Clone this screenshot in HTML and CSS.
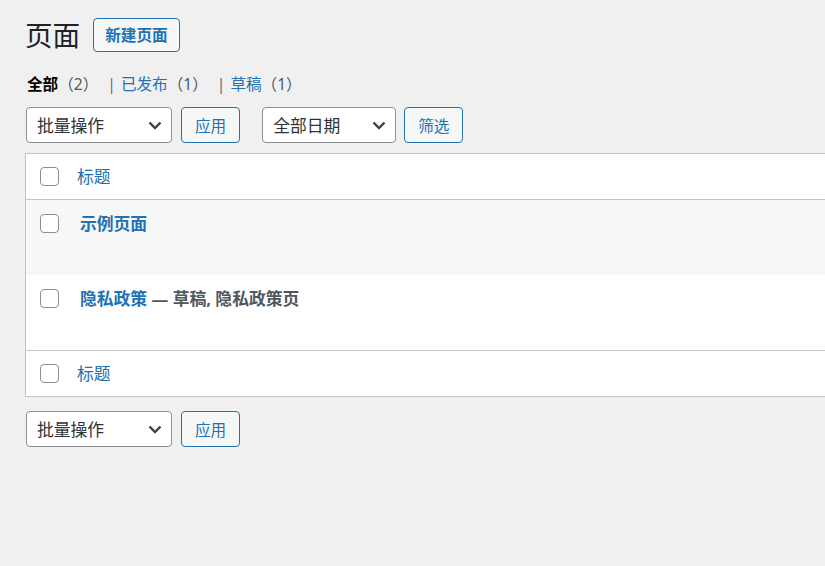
FILE: index.html
```html
<!DOCTYPE html>
<html lang="zh-CN">
<head>
    <meta charset="UTF-8">
    <meta name="viewport" content="width=device-width, initial-scale=1.0">
    <title>页面</title>
    <link rel="stylesheet" href="styles.css">
</head>
<body>
    <div class="wrap">
        <div class="page-head">
            <h1 class="page-title">页面</h1>
            <a href="#" class="title-action">新建页面</a>
        </div>

        <!-- Status filters -->
        <ul class="status-links">
            <li class="current"><a href="#">全部<span class="count">（2）</span></a></li>
            <li><span class="sep">|</span><a href="#">已发布<span class="count">（1）</span></a></li>
            <li><span class="sep">|</span><a href="#">草稿<span class="count">（1）</span></a></li>
        </ul>

        <div class="tablenav">
            <div class="select-wrap bulk">
                <select><option>批量操作</option></select>
                <svg class="chevron" width="14" height="9" viewBox="0 0 14 9"><polyline points="1.5,1.5 7,7 12.5,1.5"/></svg>
            </div>
            <button class="btn">应用</button>
            <div class="select-wrap date">
                <select><option>全部日期</option></select>
                <svg class="chevron" width="14" height="9" viewBox="0 0 14 9"><polyline points="1.5,1.5 7,7 12.5,1.5"/></svg>
            </div>
            <button class="btn">筛选</button>
        </div>

        <!-- Pages list -->
        <div class="list">
            <div class="list-head">
                <div class="check"><input type="checkbox"></div>
                <a href="#" class="col-title">标题</a>
            </div>
            <div class="list-row alt">
                <div class="check"><input type="checkbox"></div>
                <div class="row-main"><strong><a href="#" class="row-title">示例页面</a></strong></div>
            </div>
            <div class="list-row">
                <div class="check"><input type="checkbox"></div>
                <div class="row-main"><strong><a href="#" class="row-title">隐私政策</a> — <span class="post-state">草稿, 隐私政策页</span></strong></div>
            </div>
            <div class="list-foot">
                <div class="check"><input type="checkbox"></div>
                <a href="#" class="col-title">标题</a>
            </div>
        </div>

        <div class="tablenav bottom">
            <div class="select-wrap bulk">
                <select><option>批量操作</option></select>
                <svg class="chevron" width="14" height="9" viewBox="0 0 14 9"><polyline points="1.5,1.5 7,7 12.5,1.5"/></svg>
            </div>
            <button class="btn">应用</button>
        </div>
    </div>
</body>
</html>
```

FILE: styles.css
```css
html, body {
    overflow: hidden;
}
body {
    margin: 0;
    background: #f0f0f1;
    color: #3c434a;
    font-family: "Noto Sans", "Noto Sans CJK SC", sans-serif;
    font-size: 15.6px;
}
a {
    color: #2271b1;
    text-decoration: none;
}
.wrap {
    padding-left: 25px;
}
.page-head {
    display: flex;
    align-items: center;
    margin-top: 18px;
    height: 34px;
}
.page-title {
    margin: 0;
    font-size: 27.6px;
    font-weight: 400;
    line-height: 34px;
    color: #1d2327;
}
.title-action {
    margin-left: 13px;
    height: 34px;
    padding: 0 11px;
    box-sizing: border-box;
    border: 1px solid #2271b1;
    border-radius: 4px;
    background: #f6f7f7;
    font-size: 15.6px;
    font-weight: 600;
    line-height: 32px;
}
.status-links {
    list-style: none;
    margin: 21px 0 0;
    padding: 0 0 0 2px;
    display: flex;
    height: 22px;
    line-height: 22px;
    color: #646970;
}
.status-links .count {
    color: #50575e;
}
.status-links .current a {
    color: #000;
    font-weight: 600;
}
.status-links .current .count {
    font-weight: 400;
    color: #50575e;
}
.sep {
    margin: 0 5px 0 9px;
}
.tablenav {
    display: flex;
    align-items: center;
    margin-top: 12px;
    height: 36px;
}
.tablenav.bottom {
    margin-top: 14px;
}
.select-wrap {
    position: relative;
    margin-left: 1px;
}
.select-wrap.date {
    margin-left: 22px;
}
.select-wrap select {
    appearance: none;
    -webkit-appearance: none;
    height: 36px;
    box-sizing: border-box;
    border: 1px solid #8c8f94;
    border-radius: 4px;
    background: #fff;
    color: #2c3338;
    font-family: inherit;
    font-size: 16.8px;
    padding: 0 30px 0 10px;
}
.bulk select {
    width: 146px;
}
.date select {
    width: 134px;
}
.chevron {
    position: absolute;
    right: 10px;
    top: 14px;
    fill: none;
    stroke: #3c434a;
    stroke-width: 2.4;
}
.btn {
    margin-left: 9px;
    height: 36px;
    padding: 0 13px;
    border: 1px solid #2271b1;
    border-radius: 4px;
    background: #f6f7f7;
    color: #2271b1;
    font-family: inherit;
    font-size: 15.6px;
    cursor: pointer;
}
.date + .btn {
    margin-left: 8px;
}
.list {
    margin-top: 10px;
    width: 900px;
    border: 1px solid #c3c4c7;
    background: #fff;
}
.list-head, .list-foot {
    display: flex;
    align-items: center;
    height: 45px;
}
.list-head {
    border-bottom: 1px solid #c3c4c7;
}
.list-foot {
    border-top: 1px solid #c3c4c7;
}
.check {
    width: 41px;
    padding-left: 14px;
    box-sizing: border-box;
    display: flex;
}
.check input {
    appearance: none;
    -webkit-appearance: none;
    margin: 0;
    width: 19.2px;
    height: 19.2px;
    border: 1px solid #8c8f94;
    border-radius: 4px;
    background: #fff;
}
.col-title {
    padding-left: 10px;
    font-size: 16.8px;
    line-height: 22px;
}
.list-row {
    display: flex;
    height: 75px;
}
.list-row.alt {
    background: #f6f7f7;
}
.list-row .check {
    padding-top: 14px;
    align-self: flex-start;
}
.row-main {
    padding: 13px 0 0 13px;
    font-size: 16.8px;
    line-height: 22px;
    color: #50575e;
}
.row-title {
    font-weight: 600;
}
```
